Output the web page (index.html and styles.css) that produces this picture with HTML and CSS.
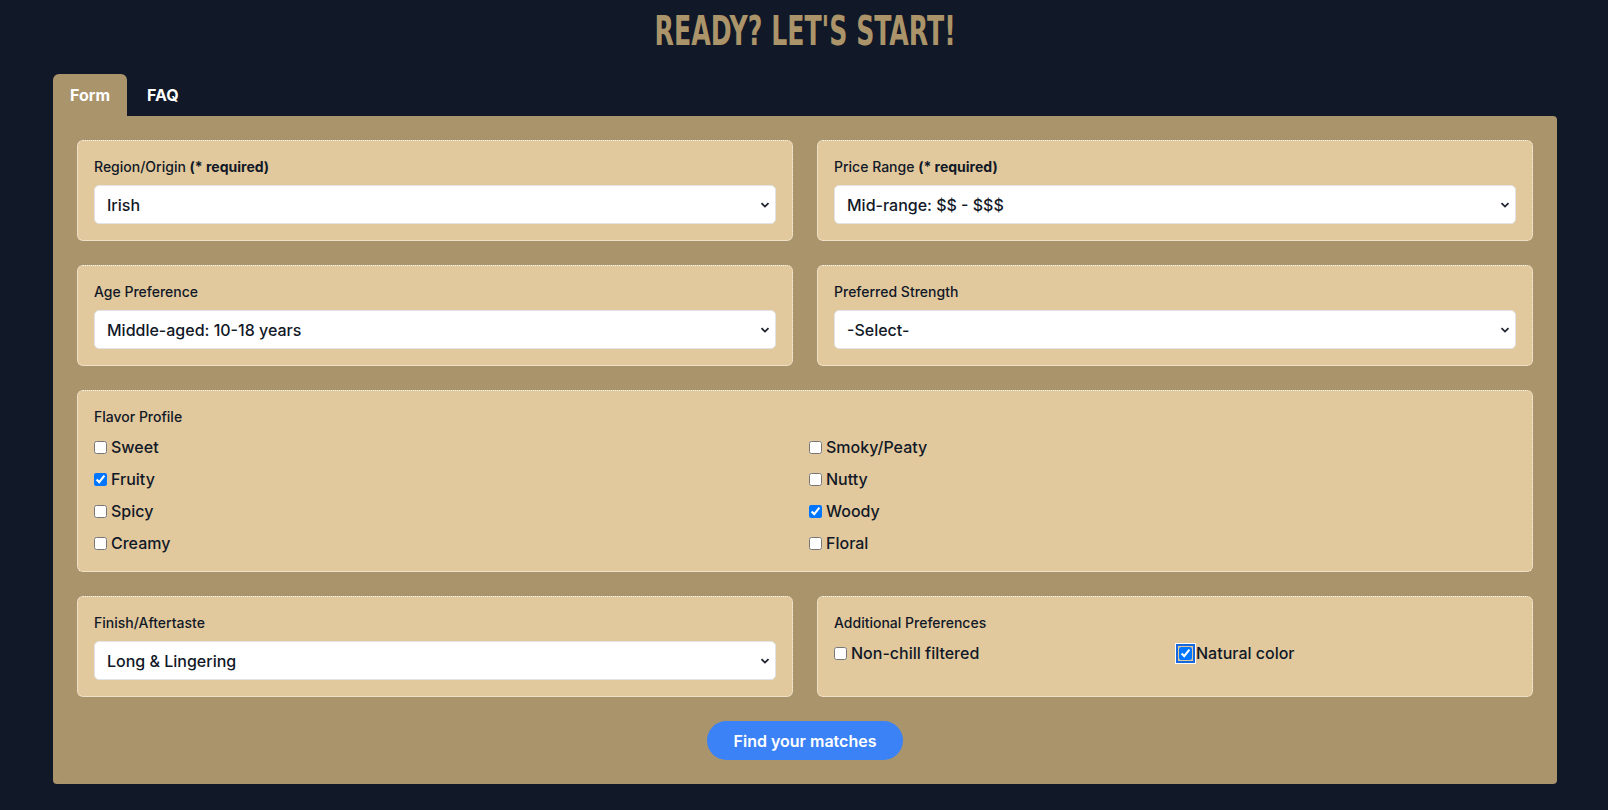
FILE: index.html
```html
<!DOCTYPE html>
<html lang="en">
<head>
    <meta charset="UTF-8">
    <meta name="viewport" content="width=device-width, initial-scale=1.0">
    <title>Whisky Finder</title>
    <link rel="stylesheet" href="styles.css">
</head>
<body>
    <div class="page">
        <h1 class="title"><span>READY? LET'S START!</span></h1>

        <div class="tabs">
            <button class="tab active" type="button">Form</button>
            <button class="tab" type="button">FAQ</button>
        </div>

        <form class="panel" id="finder-form">
            <div class="grid">
                <div class="card">
                    <label class="field-label" for="region">Region/Origin <b>(* required)</b></label>
                    <div class="select-wrap">
                        <select id="region" name="region">
                            <option>Irish</option>
                            <option>Scotch</option>
                            <option>American</option>
                            <option>Japanese</option>
                        </select>
                        <svg class="chevron" viewBox="0 0 10 6" width="10" height="6"><path d="M1.5 1.2 L5 4.6 L8.5 1.2" fill="none" stroke="#1f2430" stroke-width="1.8"/></svg>
                    </div>
                </div>

                <div class="card">
                    <label class="field-label" for="price">Price Range <b>(* required)</b></label>
                    <div class="select-wrap">
                        <select id="price" name="price">
                            <option>Mid-range: $$ - $$$</option>
                            <option>Budget: $</option>
                            <option>Premium: $$$$</option>
                        </select>
                        <svg class="chevron" viewBox="0 0 10 6" width="10" height="6"><path d="M1.5 1.2 L5 4.6 L8.5 1.2" fill="none" stroke="#1f2430" stroke-width="1.8"/></svg>
                    </div>
                </div>

                <div class="card">
                    <label class="field-label" for="age">Age Preference</label>
                    <div class="select-wrap">
                        <select id="age" name="age">
                            <option>Middle-aged: 10-18 years</option>
                            <option>Young: under 10 years</option>
                            <option>Old: 18+ years</option>
                        </select>
                        <svg class="chevron" viewBox="0 0 10 6" width="10" height="6"><path d="M1.5 1.2 L5 4.6 L8.5 1.2" fill="none" stroke="#1f2430" stroke-width="1.8"/></svg>
                    </div>
                </div>

                <div class="card">
                    <label class="field-label" for="strength">Preferred Strength</label>
                    <div class="select-wrap">
                        <select id="strength" name="strength">
                            <option>-Select-</option>
                            <option>Standard</option>
                            <option>Cask strength</option>
                        </select>
                        <svg class="chevron" viewBox="0 0 10 6" width="10" height="6"><path d="M1.5 1.2 L5 4.6 L8.5 1.2" fill="none" stroke="#1f2430" stroke-width="1.8"/></svg>
                    </div>
                </div>

                <div class="card wide">
                    <span class="field-label">Flavor Profile</span>
                    <div class="checks">
                        <label class="check"><input type="checkbox" name="flavor" value="sweet">Sweet</label>
                        <label class="check"><input type="checkbox" name="flavor" value="smoky">Smoky/Peaty</label>
                        <label class="check"><input type="checkbox" name="flavor" value="fruity" checked>Fruity</label>
                        <label class="check"><input type="checkbox" name="flavor" value="nutty">Nutty</label>
                        <label class="check"><input type="checkbox" name="flavor" value="spicy">Spicy</label>
                        <label class="check"><input type="checkbox" name="flavor" value="woody" checked>Woody</label>
                        <label class="check"><input type="checkbox" name="flavor" value="creamy">Creamy</label>
                        <label class="check"><input type="checkbox" name="flavor" value="floral">Floral</label>
                    </div>
                </div>

                <div class="card">
                    <label class="field-label" for="finish">Finish/Aftertaste</label>
                    <div class="select-wrap">
                        <select id="finish" name="finish">
                            <option>Long &amp; Lingering</option>
                            <option>Short &amp; Crisp</option>
                            <option>Medium</option>
                        </select>
                        <svg class="chevron" viewBox="0 0 10 6" width="10" height="6"><path d="M1.5 1.2 L5 4.6 L8.5 1.2" fill="none" stroke="#1f2430" stroke-width="1.8"/></svg>
                    </div>
                </div>

                <div class="card">
                    <span class="field-label">Additional Preferences</span>
                    <div class="checks">
                        <label class="check"><input type="checkbox" name="extra" value="non-chill">Non-chill filtered</label>
                        <label class="check"><input type="checkbox" name="extra" value="natural" class="focused" checked>Natural color</label>
                    </div>
                </div>
            </div>

            <div class="actions">
                <button type="submit" class="submit">Find your matches</button>
            </div>
        </form>
    </div>
</body>
</html>
```

FILE: styles.css
```css
body {
    margin: 0;
    background-color: #111827;
    font-family: 'Inter', 'Open Sans', sans-serif;
    color: #111827;
}

.page {
    padding: 6px 51px 0 53px;
}

.title {
    margin: 0 0 18px;
    text-align: center;
    line-height: 50px;
    font-family: 'Liberation Sans Narrow', 'DejaVu Sans Condensed', 'Liberation Sans', sans-serif;
    font-size: 40px;
    font-weight: 700;
    color: #ab9469;
}

.title span {
    display: inline-block;
    transform: scaleX(0.7);
}

.tabs {
    display: flex;
    gap: 3px;
}

.tab {
    height: 42px;
    padding: 0 17px;
    border: none;
    border-radius: 6px 6px 0 0;
    background: transparent;
    color: #ffffff;
    font-family: inherit;
    font-size: 16px;
    font-weight: 700;
    cursor: pointer;
}

.tab.active {
    background-color: #aa946c;
}

.panel {
    background-color: #aa946c;
    padding: 24px;
    border-radius: 0 4px 4px 4px;
}

.grid {
    display: grid;
    grid-template-columns: 1fr 1fr;
    gap: 24px;
}

.card {
    background-color: #e2c99d;
    border: 1px dotted rgba(255, 255, 255, 0.85);
    border-radius: 6px;
    padding: 15px 16px 16px;
}

.card.wide {
    grid-column: span 2;
}

.field-label {
    display: block;
    font-size: 14px;
    line-height: 21px;
    font-weight: 500;
    margin-bottom: 8px;
}

.field-label b {
    font-weight: 700;
}

.select-wrap {
    position: relative;
}

.select-wrap select {
    width: 100%;
    height: 39px;
    padding: 0 30px 0 12px;
    border: 1px solid #e1e3e6;
    border-radius: 5px;
    background-color: #ffffff;
    color: #111827;
    font-family: inherit;
    font-size: 16px;
    font-weight: 500;
    appearance: none;
    -webkit-appearance: none;
}

.chevron {
    position: absolute;
    right: 6px;
    top: 17px;
    pointer-events: none;
}

.checks {
    display: grid;
    grid-template-columns: 1fr 1fr;
    column-gap: 8px;
    row-gap: 8px;
}

.check {
    display: flex;
    align-items: center;
    height: 24px;
    font-size: 16px;
    font-weight: 500;
}

.check input {
    width: 13px;
    height: 13px;
    margin: 0 4px 0 0;
}

.check input.focused {
    border-radius: 3px;
    box-shadow: 0 0 0 1px #e2c99d, 0 0 0 3px #1668dc, 0 0 0 4px #ffffff;
}

.actions {
    display: flex;
    justify-content: center;
    margin-top: 24px;
}

.submit {
    height: 39px;
    padding: 0 27px;
    border: none;
    border-radius: 20px;
    background-color: #3b82f6;
    color: #ffffff;
    font-family: inherit;
    font-size: 16px;
    font-weight: 600;
    cursor: pointer;
}
```
